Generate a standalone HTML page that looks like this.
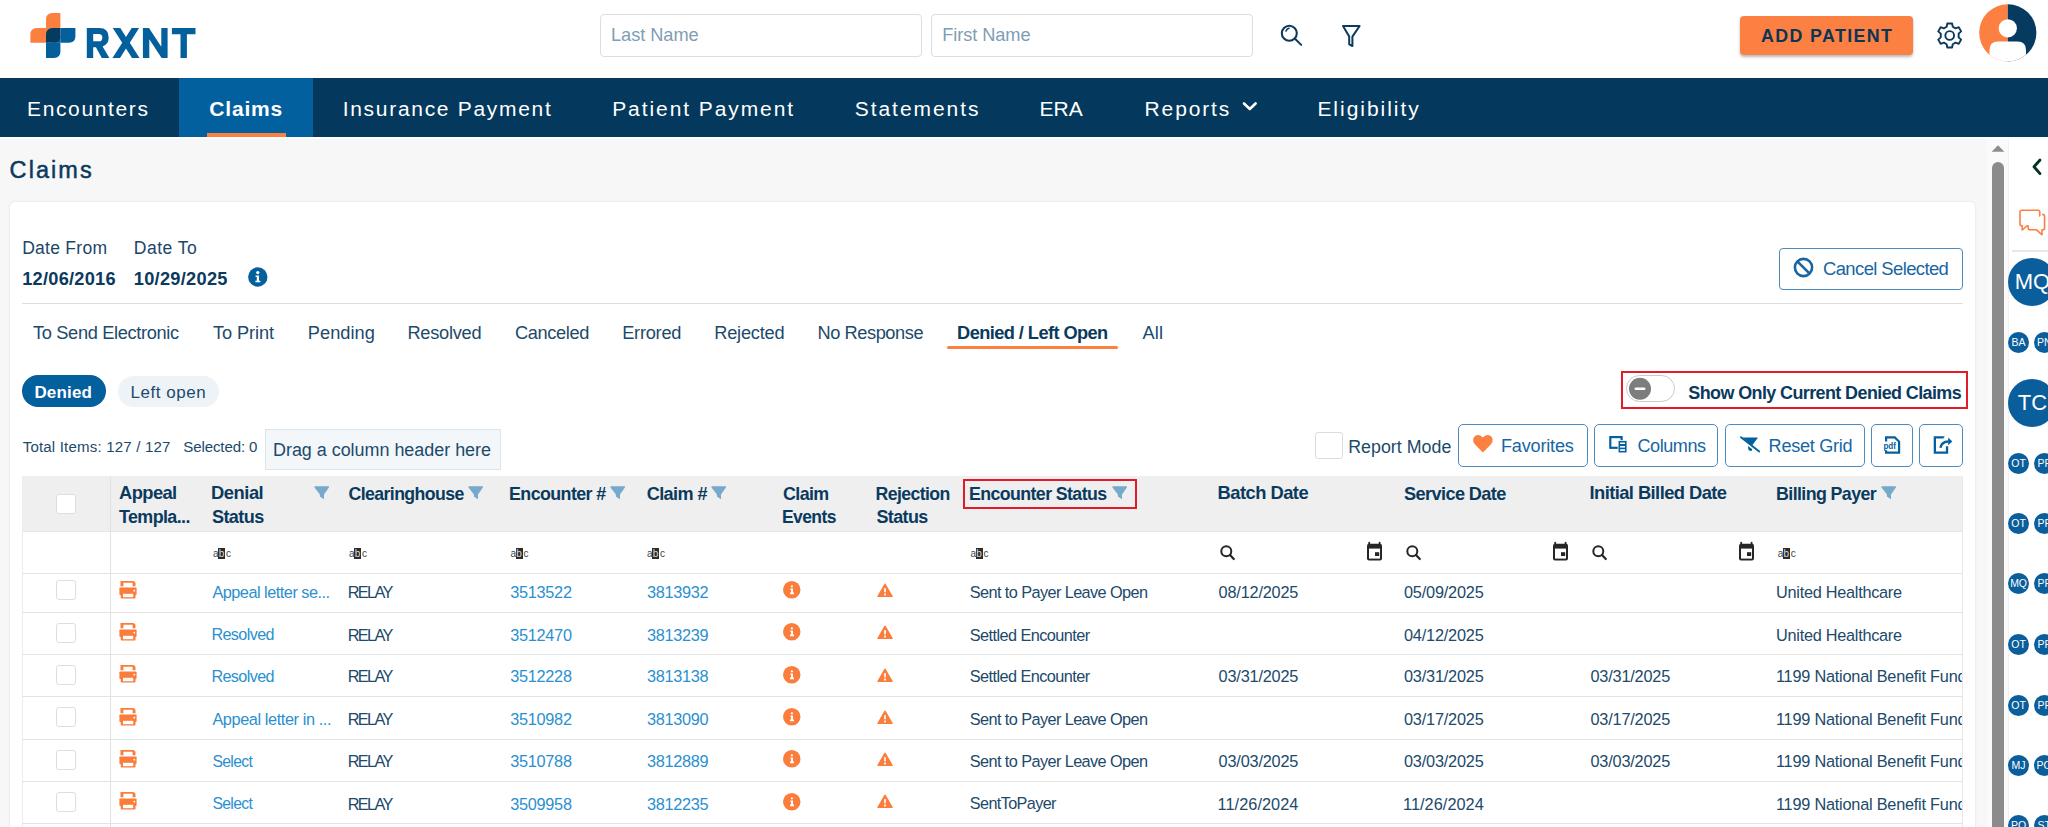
<!DOCTYPE html>
<html><head><meta charset="utf-8"><title>Claims</title>
<style>
html,body{margin:0;padding:0;width:2048px;height:827px;overflow:hidden;background:#f7f7f7;font-family:"Liberation Sans",sans-serif;}
.a{position:absolute;box-sizing:border-box;}
.t{position:absolute;white-space:nowrap;line-height:1;}
svg{position:absolute;overflow:visible;}
</style></head><body>
<!-- header -->
<div class="a" style="left:0;top:0;width:2048px;height:78px;background:#fff"></div>
<svg style="left:0;top:0" width="220" height="78">
  <path d="M46 28 V19.5 Q46 13 52.5 13 H60.4 V28 Z" fill="#fb7f3f"/>
  <path d="M30.4 42.8 V34.5 Q30.4 28 36.9 28 H46 V42.8 Z" fill="#fb7f3f"/>
  <path d="M60.4 28 H75.4 V36.3 Q75.4 42.8 68.9 42.8 H60.4 Z" fill="#04609d"/>
  <path d="M46 42.8 H60.4 V51.5 Q60.4 58 53.9 58 H46 Z" fill="#04609d"/>
  <path d="M46 28 H53.2 V35.4 H46 Z" fill="#fb7f3f"/><path d="M53.2 35.4 H60.4 V42.8 H53.2 Z" fill="#04609d"/>
  <path d="M52.8 28 H60.4 V36.3 Q60.4 42.8 53.9 42.8 H46 V34.8 Q46 28 52.8 28 Z" fill="#063b60"/>
  <path fill="#04609d" fill-rule="evenodd" d="M86.8 58 V28.1 H99.2 Q108.7 28.1 108.7 37.6 Q108.7 44.4 102.6 46.6 L109.4 58 H101.8 L95.9 47.2 H93.2 V58 Z M93.2 34 V41.3 H98.8 Q102.3 41.3 102.3 37.65 Q102.3 34 98.8 34 Z"/>
  <path fill="#04609d" d="M112.8 28.1 H120.3 L126 36.9 L131.7 28.1 H139.1 L129.8 42.7 L139.5 58 H132 L126 48.5 L120 58 H112.5 L122.2 42.7 Z"/>
  <path fill="#04609d" d="M142.9 58 V28.1 H149 L161.3 46.8 V28.1 H167.6 V58 H161.6 L149.3 39.2 V58 Z"/>
  <path fill="#04609d" d="M171.9 28.1 H195.5 V34.2 H186.9 V58 H180.5 V34.2 H171.9 Z"/>
</svg>
<div class="a" style="left:600px;top:14px;width:322px;height:43px;border:1px solid #dedede;border-radius:4px;background:#fff"></div>
<div class="a" style="left:931px;top:14px;width:322px;height:43px;border:1px solid #dedede;border-radius:4px;background:#fff"></div>
<svg style="left:1278px;top:22px" width="30" height="30">
  <circle cx="11.3" cy="11.2" r="7.5" fill="none" stroke="#0b3a5e" stroke-width="2.1"/>
  <path d="M17 16.8 L23.2 22.9" stroke="#0b3a5e" stroke-width="2" stroke-linecap="round"/>
  <path d="M8 9 Q9 6.8 11 6.3" stroke="#0b3a5e" stroke-width="1.6" fill="none" stroke-linecap="round"/>
</svg>
<svg style="left:1340px;top:24px" width="24" height="26">
  <path d="M3 2 H19.6 L12.4 12.6 V22 L9.2 20.3 V12.6 Z" fill="none" stroke="#0b3a5e" stroke-width="2" stroke-linejoin="round"/>
</svg>
<div class="a" style="left:1740px;top:16px;width:173px;height:39px;background:#fb8041;border-radius:4px;box-shadow:0 2px 3px rgba(0,0,0,0.28)"></div>
<svg style="left:1936px;top:22px" width="28" height="28">
  <g transform="translate(13.7,13.5) scale(1.09)" fill="none" stroke="#0b3a5e" stroke-width="1.75" stroke-linejoin="round">
    <path id="gear" d="M-2.2 -11 L2.2 -11 L2.8 -8 L5.4 -6.6 L8.3 -7.6 L10.5 -3.8 L8.2 -1.7 L8.2 1.7 L10.5 3.8 L8.3 7.6 L5.4 6.6 L2.8 8 L2.2 11 L-2.2 11 L-2.8 8 L-5.4 6.6 L-8.3 7.6 L-10.5 3.8 L-8.2 1.7 L-8.2 -1.7 L-10.5 -3.8 L-8.3 -7.6 L-5.4 -6.6 L-2.8 -8 Z"/>
    <circle r="4"/>
  </g>
</svg>
<svg style="left:1979px;top:4px" width="58" height="58">
  <defs><clipPath id="cav"><circle cx="28.8" cy="28.8" r="28.6"/></clipPath></defs>
  <g clip-path="url(#cav)">
    <rect x="0" y="0" width="28.8" height="58" fill="#fb8041"/>
    <rect x="28.8" y="0" width="30" height="58" fill="#063a5e"/>
    <circle cx="28.8" cy="24.3" r="9.1" fill="#fff"/>
    <path d="M10.5 60 V46 Q10.5 37.5 19 37.5 H38.6 Q47 37.5 47 46 V60 Z" fill="#fff"/>
  </g>
</svg>
<!-- nav -->
<div class="a" style="left:0;top:78px;width:2048px;height:59px;background:#04395d"></div>
<div class="a" style="left:179px;top:78px;width:134px;height:59px;background:#03609e"></div>
<div class="a" style="left:207px;top:133px;width:79px;height:4px;background:#fb8041"></div>
<svg style="left:1240px;top:98px" width="20" height="16">
  <path d="M4 5.5 L9.8 11 L15.6 5.5" fill="none" stroke="#fff" stroke-width="2.6" stroke-linecap="round" stroke-linejoin="round"/>
</svg>
<!-- page card -->
<div class="a" style="left:10px;top:202px;width:1965px;height:640px;background:#fff;border-radius:5px;box-shadow:0 0 3px rgba(0,0,0,0.10)"></div>
<svg style="left:248px;top:267px" width="20" height="20">
  <circle cx="9.8" cy="10" r="9.7" fill="#04609d"/>
  <circle cx="9.8" cy="5.6" r="1.6" fill="#fff"/>
  <path d="M7.6 8.5 H11 V13.8 H12.4 V15.2 H7.4 V13.8 H8.8 V9.9 H7.6 Z" fill="#fff"/>
</svg>
<div class="a" style="left:1779px;top:248px;width:184px;height:42px;border:1.5px solid #4a8bc0;border-radius:4px"></div>
<svg style="left:1792px;top:256.2px" width="24" height="24">
  <circle cx="11.5" cy="11.5" r="8.6" fill="none" stroke="#1766a3" stroke-width="2.6"/>
  <path d="M5.6 5.6 L17.4 17.4" stroke="#1766a3" stroke-width="2.6"/>
</svg>
<div class="a" style="left:22px;top:302.5px;width:1941px;height:1.5px;background:#dedede"></div>
<div class="a" style="left:947px;top:346px;width:171px;height:3px;background:#fb8041;border-radius:2px"></div>
<div class="a" style="left:22px;top:375px;width:84px;height:32px;background:#04609d;border-radius:16px"></div>
<div class="a" style="left:118px;top:375.5px;width:101px;height:31px;background:#eef3f7;border-radius:16px"></div>
<div class="a" style="left:1621px;top:371px;width:347px;height:38px;border:2px solid #e21b2b"></div>
<div class="a" style="left:1626px;top:375px;width:49px;height:27px;border:1.2px solid #c9c9c9;border-radius:14px;background:#fff"></div>
<svg style="left:1627px;top:377px" width="26" height="26">
  <circle cx="13" cy="11.7" r="11" fill="#7d7d7d"/>
  <rect x="7.6" y="10.6" width="10.8" height="2.4" rx="1" fill="#fff"/>
</svg>
<!-- toolbar -->
<div class="a" style="left:264.6px;top:428.5px;width:236px;height:41px;background:#f3f7fa;border:1px solid #dbe5ec"></div>
<div class="a" style="left:1314.8px;top:432.4px;width:28px;height:27px;border:1px solid #dcdcdc;border-radius:3px;background:#fff"></div>
<div class="a" style="left:1458.3px;top:424.2px;width:129.4px;height:42.8px;border:1.5px solid #4a8bc0;border-radius:5px"></div>
<div class="a" style="left:1594.3px;top:424.2px;width:124.1px;height:42.8px;border:1.5px solid #4a8bc0;border-radius:5px"></div>
<div class="a" style="left:1725.4px;top:424.2px;width:139.4px;height:42.8px;border:1.5px solid #4a8bc0;border-radius:5px"></div>
<div class="a" style="left:1871.2px;top:424.2px;width:42.1px;height:42.8px;border:1.5px solid #4a8bc0;border-radius:5px"></div>
<div class="a" style="left:1919.4px;top:424.2px;width:43.2px;height:42.8px;border:1.5px solid #4a8bc0;border-radius:5px"></div>
<svg style="left:1472px;top:434px" width="22" height="20">
  <path d="M10.9 18.6 L3 10.6 Q0.6 8.2 1.2 5.2 Q2 1.5 5.8 1.1 Q8.9 0.9 10.9 3.6 Q12.9 0.9 16 1.1 Q19.8 1.5 20.6 5.2 Q21.2 8.2 18.8 10.6 Z" fill="#fb8041"/>
</svg>
<svg style="left:1608px;top:434px" width="22" height="22">
  <rect x="2.3" y="3.1" width="11.3" height="10.7" fill="none" stroke="#04609d" stroke-width="2.2"/>
  <rect x="10.1" y="6.5" width="8.9" height="12.4" fill="#04609d" stroke="#fff" stroke-width="0.8"/>
  <rect x="12.1" y="8.5" width="4.9" height="1.5" fill="#fff"/><rect x="12.1" y="12" width="4.9" height="1.6" fill="#fff"/><rect x="12.1" y="15.2" width="4.9" height="1.7" fill="#fff"/>
</svg>
<svg style="left:1739px;top:434px" width="22" height="20">
  <path d="M3.6 3.5 H18.4 Q19 3.6 18.5 4.3 L13.1 11.4 Z" fill="#04609d"/>
  <path d="M2 3.2 L20.2 17.5" stroke="#04609d" stroke-width="1.9" stroke-linecap="round"/>
  <path d="M9.1 11.9 L13 14.9 Q13.6 17.2 11.6 17 Q9.1 16.6 9.1 14.2 Z" fill="#04609d"/>
</svg>
<svg style="left:1882px;top:436px" width="22" height="20">
  <path d="M3 0.2 H13.2 L18.2 5.2 V17.7 H3 V14.2 H5.2 V15.5 H16 V6.1 L12.3 2.4 H5.2 V5.4 H3 Z" fill="#04609d"/>
  <text x="1.4" y="12.6" font-family="Liberation Sans" font-weight="700" font-size="8.6" fill="#04609d" textLength="12.6" lengthAdjust="spacingAndGlyphs">pdf</text>
</svg>
<svg style="left:1932px;top:435px" width="22" height="22">
  <path d="M1.7 1.2 H12.8 L11.3 3.5 H4 V16.4 H13.9 V11.3 H16.2 V18.7 H1.7 Z" fill="#04609d"/>
  <path d="M8.4 12.8 Q9.4 6.5 16.6 6.4" fill="none" stroke="#04609d" stroke-width="2.5"/>
  <path d="M16.2 2.6 L20.3 6.4 L16.2 10.2 Z" fill="#04609d"/>
</svg>
<!-- grid -->
<div class="a" style="left:22px;top:476px;width:1941px;height:56px;background:#efefef"></div>
<div class="a" style="left:963.4px;top:479px;width:174px;height:30px;border:2px solid #e21b2b"></div>
<div class="a" style="left:22px;top:531px;width:1941px;height:1px;background:#e6e6e6"></div>
<div class="a" style="left:22px;top:573px;width:1941px;height:1px;background:#e4e4e4"></div>
<div class="a" style="left:1962px;top:476px;width:1px;height:360px;background:#e8e8e8"></div>
<div class="a" style="left:109.5px;top:476px;width:1.5px;height:360px;background:#e2e2e2"></div>
<div class="a" style="left:22px;top:476px;width:1px;height:360px;background:#ececec"></div>
<div class="a" style="left:56.3px;top:494px;width:19.6px;height:19.5px;border:1px solid #dedede;border-radius:3px;background:#fff"></div>
<svg style="left:313.5px;top:486.0px" width="16" height="14"><path d="M1.2 0.2 H14.2 Q15.6 0.2 14.9 1.4 L10 8.4 V13.3 L5.9 10.6 V8.4 L0.5 1.4 Q-0.2 0.2 1.2 0.2 Z" fill="#76a9cc"/></svg>
<svg style="left:467.8px;top:486.0px" width="16" height="14"><path d="M1.2 0.2 H14.2 Q15.6 0.2 14.9 1.4 L10 8.4 V13.3 L5.9 10.6 V8.4 L0.5 1.4 Q-0.2 0.2 1.2 0.2 Z" fill="#76a9cc"/></svg>
<svg style="left:610.0px;top:486.0px" width="16" height="14"><path d="M1.2 0.2 H14.2 Q15.6 0.2 14.9 1.4 L10 8.4 V13.3 L5.9 10.6 V8.4 L0.5 1.4 Q-0.2 0.2 1.2 0.2 Z" fill="#76a9cc"/></svg>
<svg style="left:711.0px;top:486.0px" width="16" height="14"><path d="M1.2 0.2 H14.2 Q15.6 0.2 14.9 1.4 L10 8.4 V13.3 L5.9 10.6 V8.4 L0.5 1.4 Q-0.2 0.2 1.2 0.2 Z" fill="#76a9cc"/></svg>
<svg style="left:1112.0px;top:486.0px" width="16" height="14"><path d="M1.2 0.2 H14.2 Q15.6 0.2 14.9 1.4 L10 8.4 V13.3 L5.9 10.6 V8.4 L0.5 1.4 Q-0.2 0.2 1.2 0.2 Z" fill="#76a9cc"/></svg>
<svg style="left:1881.0px;top:486.0px" width="16" height="14"><path d="M1.2 0.2 H14.2 Q15.6 0.2 14.9 1.4 L10 8.4 V13.3 L5.9 10.6 V8.4 L0.5 1.4 Q-0.2 0.2 1.2 0.2 Z" fill="#76a9cc"/></svg>
<div class="a" style="left:212.9px;top:547px;width:20px;height:13px;font-family:'Liberation Sans';font-size:10px;line-height:13px;color:#444;white-space:nowrap"><span style="position:absolute;left:0;top:0">a</span><span style="position:absolute;left:5px;top:1px;width:7px;height:11px;background:#2b2b2b"></span><span style="position:absolute;left:5.8px;top:0;color:#ddd">b</span><span style="position:absolute;left:13px;top:0">c</span></div>
<div class="a" style="left:348.9px;top:547px;width:20px;height:13px;font-family:'Liberation Sans';font-size:10px;line-height:13px;color:#444;white-space:nowrap"><span style="position:absolute;left:0;top:0">a</span><span style="position:absolute;left:5px;top:1px;width:7px;height:11px;background:#2b2b2b"></span><span style="position:absolute;left:5.8px;top:0;color:#ddd">b</span><span style="position:absolute;left:13px;top:0">c</span></div>
<div class="a" style="left:510.5px;top:547px;width:20px;height:13px;font-family:'Liberation Sans';font-size:10px;line-height:13px;color:#444;white-space:nowrap"><span style="position:absolute;left:0;top:0">a</span><span style="position:absolute;left:5px;top:1px;width:7px;height:11px;background:#2b2b2b"></span><span style="position:absolute;left:5.8px;top:0;color:#ddd">b</span><span style="position:absolute;left:13px;top:0">c</span></div>
<div class="a" style="left:647.0px;top:547px;width:20px;height:13px;font-family:'Liberation Sans';font-size:10px;line-height:13px;color:#444;white-space:nowrap"><span style="position:absolute;left:0;top:0">a</span><span style="position:absolute;left:5px;top:1px;width:7px;height:11px;background:#2b2b2b"></span><span style="position:absolute;left:5.8px;top:0;color:#ddd">b</span><span style="position:absolute;left:13px;top:0">c</span></div>
<div class="a" style="left:970.5px;top:547px;width:20px;height:13px;font-family:'Liberation Sans';font-size:10px;line-height:13px;color:#444;white-space:nowrap"><span style="position:absolute;left:0;top:0">a</span><span style="position:absolute;left:5px;top:1px;width:7px;height:11px;background:#2b2b2b"></span><span style="position:absolute;left:5.8px;top:0;color:#ddd">b</span><span style="position:absolute;left:13px;top:0">c</span></div>
<div class="a" style="left:1777.7px;top:547px;width:20px;height:13px;font-family:'Liberation Sans';font-size:10px;line-height:13px;color:#444;white-space:nowrap"><span style="position:absolute;left:0;top:0">a</span><span style="position:absolute;left:5px;top:1px;width:7px;height:11px;background:#2b2b2b"></span><span style="position:absolute;left:5.8px;top:0;color:#ddd">b</span><span style="position:absolute;left:13px;top:0">c</span></div>
<svg style="left:1219.6px;top:545px" width="18" height="18"><circle cx="6.3" cy="6.3" r="5" fill="none" stroke="#262626" stroke-width="2"/><path d="M10 10 L13.8 14" stroke="#262626" stroke-width="2.2" stroke-linecap="round"/></svg>
<svg style="left:1405.8px;top:545px" width="18" height="18"><circle cx="6.3" cy="6.3" r="5" fill="none" stroke="#262626" stroke-width="2"/><path d="M10 10 L13.8 14" stroke="#262626" stroke-width="2.2" stroke-linecap="round"/></svg>
<svg style="left:1592.2px;top:545px" width="18" height="18"><circle cx="6.3" cy="6.3" r="5" fill="none" stroke="#262626" stroke-width="2"/><path d="M10 10 L13.8 14" stroke="#262626" stroke-width="2.2" stroke-linecap="round"/></svg>
<svg style="left:1365.8px;top:541.5px" width="18" height="20"><path d="M3.2 0.6 V2 M13.6 0.6 V2" stroke="#262626" stroke-width="1.8" stroke-linecap="round"/><rect x="1" y="1.8" width="15" height="16.8" rx="2" fill="#262626"/><rect x="3" y="6.6" width="11" height="10" fill="#fff"/><rect x="9" y="10.2" width="4.2" height="3.8" fill="#262626"/></svg>
<svg style="left:1552.0px;top:541.5px" width="18" height="20"><path d="M3.2 0.6 V2 M13.6 0.6 V2" stroke="#262626" stroke-width="1.8" stroke-linecap="round"/><rect x="1" y="1.8" width="15" height="16.8" rx="2" fill="#262626"/><rect x="3" y="6.6" width="11" height="10" fill="#fff"/><rect x="9" y="10.2" width="4.2" height="3.8" fill="#262626"/></svg>
<svg style="left:1738.4px;top:541.5px" width="18" height="20"><path d="M3.2 0.6 V2 M13.6 0.6 V2" stroke="#262626" stroke-width="1.8" stroke-linecap="round"/><rect x="1" y="1.8" width="15" height="16.8" rx="2" fill="#262626"/><rect x="3" y="6.6" width="11" height="10" fill="#fff"/><rect x="9" y="10.2" width="4.2" height="3.8" fill="#262626"/></svg>
<div class="a" style="left:22px;top:612px;width:1941px;height:1px;background:#e4e4e4"></div>
<div class="a" style="left:56.3px;top:580.3px;width:19.6px;height:20px;border:1px solid #dedede;border-radius:3px;background:#fff"></div>
<svg style="left:118.5px;top:580.7px" width="18" height="19"><path d="M1.5 5.2 V0.1 H13.8 Q16.5 0.1 16.5 2.8 V5.2 H13.6 V1.7 H4.4 V5.2 Z" fill="#fb7d3c"/><rect x="0.4" y="6.4" width="17.2" height="7.7" rx="0.8" fill="#fb7d3c"/><circle cx="15.3" cy="9.7" r="0.9" fill="#fff"/><rect x="1.7" y="12.4" width="14.8" height="5.1" rx="0.8" fill="#fb7d3c"/><rect x="4" y="12.8" width="10.2" height="3.4" fill="#fff"/></svg>
<svg style="left:783px;top:581.0px" width="18" height="18"><circle cx="8.75" cy="8.75" r="8.75" fill="#fb7d3c"/><circle cx="8.9" cy="5.3" r="1.1" fill="#fff"/><path d="M7.3 7.4 H10 V11.6 H11 V13.2 H7 V11.6 H8 V8.8 H7.3 Z" fill="#fff"/></svg>
<svg style="left:877px;top:582.9px" width="17" height="15"><path d="M8 0.4 Q8.4 0.4 8.7 0.9 L15.8 13.2 Q16.1 14 15.2 14 H0.9 Q-0.1 14 0.3 13.2 L7.3 0.9 Q7.6 0.4 8 0.4 Z" fill="#fb7d3c"/><rect x="7.15" y="5.1" width="1.7" height="4.2" fill="#fff"/><rect x="7.15" y="10.5" width="1.7" height="2" fill="#fff"/></svg>
<div class="a" style="left:22px;top:654px;width:1941px;height:1px;background:#e4e4e4"></div>
<div class="a" style="left:56.3px;top:622.7px;width:19.6px;height:20px;border:1px solid #dedede;border-radius:3px;background:#fff"></div>
<svg style="left:118.5px;top:623.1px" width="18" height="19"><path d="M1.5 5.2 V0.1 H13.8 Q16.5 0.1 16.5 2.8 V5.2 H13.6 V1.7 H4.4 V5.2 Z" fill="#fb7d3c"/><rect x="0.4" y="6.4" width="17.2" height="7.7" rx="0.8" fill="#fb7d3c"/><circle cx="15.3" cy="9.7" r="0.9" fill="#fff"/><rect x="1.7" y="12.4" width="14.8" height="5.1" rx="0.8" fill="#fb7d3c"/><rect x="4" y="12.8" width="10.2" height="3.4" fill="#fff"/></svg>
<svg style="left:783px;top:623.4px" width="18" height="18"><circle cx="8.75" cy="8.75" r="8.75" fill="#fb7d3c"/><circle cx="8.9" cy="5.3" r="1.1" fill="#fff"/><path d="M7.3 7.4 H10 V11.6 H11 V13.2 H7 V11.6 H8 V8.8 H7.3 Z" fill="#fff"/></svg>
<svg style="left:877px;top:625.3px" width="17" height="15"><path d="M8 0.4 Q8.4 0.4 8.7 0.9 L15.8 13.2 Q16.1 14 15.2 14 H0.9 Q-0.1 14 0.3 13.2 L7.3 0.9 Q7.6 0.4 8 0.4 Z" fill="#fb7d3c"/><rect x="7.15" y="5.1" width="1.7" height="4.2" fill="#fff"/><rect x="7.15" y="10.5" width="1.7" height="2" fill="#fff"/></svg>
<div class="a" style="left:22px;top:696px;width:1941px;height:1px;background:#e4e4e4"></div>
<div class="a" style="left:56.3px;top:665.0px;width:19.6px;height:20px;border:1px solid #dedede;border-radius:3px;background:#fff"></div>
<svg style="left:118.5px;top:665.4px" width="18" height="19"><path d="M1.5 5.2 V0.1 H13.8 Q16.5 0.1 16.5 2.8 V5.2 H13.6 V1.7 H4.4 V5.2 Z" fill="#fb7d3c"/><rect x="0.4" y="6.4" width="17.2" height="7.7" rx="0.8" fill="#fb7d3c"/><circle cx="15.3" cy="9.7" r="0.9" fill="#fff"/><rect x="1.7" y="12.4" width="14.8" height="5.1" rx="0.8" fill="#fb7d3c"/><rect x="4" y="12.8" width="10.2" height="3.4" fill="#fff"/></svg>
<svg style="left:783px;top:665.7px" width="18" height="18"><circle cx="8.75" cy="8.75" r="8.75" fill="#fb7d3c"/><circle cx="8.9" cy="5.3" r="1.1" fill="#fff"/><path d="M7.3 7.4 H10 V11.6 H11 V13.2 H7 V11.6 H8 V8.8 H7.3 Z" fill="#fff"/></svg>
<svg style="left:877px;top:667.6px" width="17" height="15"><path d="M8 0.4 Q8.4 0.4 8.7 0.9 L15.8 13.2 Q16.1 14 15.2 14 H0.9 Q-0.1 14 0.3 13.2 L7.3 0.9 Q7.6 0.4 8 0.4 Z" fill="#fb7d3c"/><rect x="7.15" y="5.1" width="1.7" height="4.2" fill="#fff"/><rect x="7.15" y="10.5" width="1.7" height="2" fill="#fff"/></svg>
<div class="a" style="left:22px;top:739px;width:1941px;height:1px;background:#e4e4e4"></div>
<div class="a" style="left:56.3px;top:707.3px;width:19.6px;height:20px;border:1px solid #dedede;border-radius:3px;background:#fff"></div>
<svg style="left:118.5px;top:707.7px" width="18" height="19"><path d="M1.5 5.2 V0.1 H13.8 Q16.5 0.1 16.5 2.8 V5.2 H13.6 V1.7 H4.4 V5.2 Z" fill="#fb7d3c"/><rect x="0.4" y="6.4" width="17.2" height="7.7" rx="0.8" fill="#fb7d3c"/><circle cx="15.3" cy="9.7" r="0.9" fill="#fff"/><rect x="1.7" y="12.4" width="14.8" height="5.1" rx="0.8" fill="#fb7d3c"/><rect x="4" y="12.8" width="10.2" height="3.4" fill="#fff"/></svg>
<svg style="left:783px;top:708.0px" width="18" height="18"><circle cx="8.75" cy="8.75" r="8.75" fill="#fb7d3c"/><circle cx="8.9" cy="5.3" r="1.1" fill="#fff"/><path d="M7.3 7.4 H10 V11.6 H11 V13.2 H7 V11.6 H8 V8.8 H7.3 Z" fill="#fff"/></svg>
<svg style="left:877px;top:709.9px" width="17" height="15"><path d="M8 0.4 Q8.4 0.4 8.7 0.9 L15.8 13.2 Q16.1 14 15.2 14 H0.9 Q-0.1 14 0.3 13.2 L7.3 0.9 Q7.6 0.4 8 0.4 Z" fill="#fb7d3c"/><rect x="7.15" y="5.1" width="1.7" height="4.2" fill="#fff"/><rect x="7.15" y="10.5" width="1.7" height="2" fill="#fff"/></svg>
<div class="a" style="left:22px;top:781px;width:1941px;height:1px;background:#e4e4e4"></div>
<div class="a" style="left:56.3px;top:749.5px;width:19.6px;height:20px;border:1px solid #dedede;border-radius:3px;background:#fff"></div>
<svg style="left:118.5px;top:749.9px" width="18" height="19"><path d="M1.5 5.2 V0.1 H13.8 Q16.5 0.1 16.5 2.8 V5.2 H13.6 V1.7 H4.4 V5.2 Z" fill="#fb7d3c"/><rect x="0.4" y="6.4" width="17.2" height="7.7" rx="0.8" fill="#fb7d3c"/><circle cx="15.3" cy="9.7" r="0.9" fill="#fff"/><rect x="1.7" y="12.4" width="14.8" height="5.1" rx="0.8" fill="#fb7d3c"/><rect x="4" y="12.8" width="10.2" height="3.4" fill="#fff"/></svg>
<svg style="left:783px;top:750.2px" width="18" height="18"><circle cx="8.75" cy="8.75" r="8.75" fill="#fb7d3c"/><circle cx="8.9" cy="5.3" r="1.1" fill="#fff"/><path d="M7.3 7.4 H10 V11.6 H11 V13.2 H7 V11.6 H8 V8.8 H7.3 Z" fill="#fff"/></svg>
<svg style="left:877px;top:752.1px" width="17" height="15"><path d="M8 0.4 Q8.4 0.4 8.7 0.9 L15.8 13.2 Q16.1 14 15.2 14 H0.9 Q-0.1 14 0.3 13.2 L7.3 0.9 Q7.6 0.4 8 0.4 Z" fill="#fb7d3c"/><rect x="7.15" y="5.1" width="1.7" height="4.2" fill="#fff"/><rect x="7.15" y="10.5" width="1.7" height="2" fill="#fff"/></svg>
<div class="a" style="left:22px;top:823px;width:1941px;height:1px;background:#e4e4e4"></div>
<div class="a" style="left:56.3px;top:791.8px;width:19.6px;height:20px;border:1px solid #dedede;border-radius:3px;background:#fff"></div>
<svg style="left:118.5px;top:792.2px" width="18" height="19"><path d="M1.5 5.2 V0.1 H13.8 Q16.5 0.1 16.5 2.8 V5.2 H13.6 V1.7 H4.4 V5.2 Z" fill="#fb7d3c"/><rect x="0.4" y="6.4" width="17.2" height="7.7" rx="0.8" fill="#fb7d3c"/><circle cx="15.3" cy="9.7" r="0.9" fill="#fff"/><rect x="1.7" y="12.4" width="14.8" height="5.1" rx="0.8" fill="#fb7d3c"/><rect x="4" y="12.8" width="10.2" height="3.4" fill="#fff"/></svg>
<svg style="left:783px;top:792.5px" width="18" height="18"><circle cx="8.75" cy="8.75" r="8.75" fill="#fb7d3c"/><circle cx="8.9" cy="5.3" r="1.1" fill="#fff"/><path d="M7.3 7.4 H10 V11.6 H11 V13.2 H7 V11.6 H8 V8.8 H7.3 Z" fill="#fff"/></svg>
<svg style="left:877px;top:794.4px" width="17" height="15"><path d="M8 0.4 Q8.4 0.4 8.7 0.9 L15.8 13.2 Q16.1 14 15.2 14 H0.9 Q-0.1 14 0.3 13.2 L7.3 0.9 Q7.6 0.4 8 0.4 Z" fill="#fb7d3c"/><rect x="7.15" y="5.1" width="1.7" height="4.2" fill="#fff"/><rect x="7.15" y="10.5" width="1.7" height="2" fill="#fff"/></svg>
<!-- scrollbar and sidebar -->
<div class="a" style="left:0;top:137px;width:2048px;height:1.6px;background:#fff"></div>
<div class="a" style="left:1987px;top:138.6px;width:21.5px;height:690px;background:#fafafa"></div>
<svg style="left:1990px;top:144px" width="16" height="10"><path d="M1.6 7.8 L8 1.2 L14.4 7.8 Z" fill="#8d8d8d"/></svg>
<div class="a" style="left:1992px;top:161.6px;width:12px;height:680px;background:#8b8b8b;border-radius:6px"></div>
<div class="a" style="left:2008px;top:138.6px;width:40px;height:690px;background:#fff;border-left:1px solid #f0f0f0"></div>
<svg style="left:2030px;top:157px" width="14" height="20"><path d="M10 3 L4 9.8 L10 16.6" fill="none" stroke="#06301f" stroke-width="2.8" stroke-linecap="round" stroke-linejoin="round"/></svg>
<svg style="left:2018px;top:209px" width="30" height="30">
  <path d="M2 3 Q2 1.2 3.8 1.2 H20 Q21.8 1.2 21.8 3 V15 Q21.8 16.8 20 16.8 H9 L4.2 21 V16.8 H3.8 Q2 16.8 2 15 Z" fill="#fff" stroke="#fb8041" stroke-width="1.6" stroke-linejoin="round"/>
  <path d="M24.2 5.4 Q26.6 5.4 26.6 7.6 V19 Q26.6 20.8 24.8 20.8 H24 V25.8 L18.6 20.8 H12 Q10.2 20.8 10.2 19 V16.8" fill="#fff" stroke="#fb8041" stroke-width="1.6" stroke-linejoin="round"/>
</svg>
<div class="a" style="left:2012px;top:250px;width:36px;height:1.5px;background:#e8e8e8"></div>
<div class="a" style="left:2008.4px;top:258.2px;width:48.0px;height:48.0px;border-radius:50%;background:#0a5e9b;color:#fff;font-size:22.0px;line-height:48.0px;text-align:center;white-space:nowrap;overflow:hidden">MQ</div>
<div class="a" style="left:2008.4px;top:378.5px;width:48.0px;height:48.0px;border-radius:50%;background:#0a5e9b;color:#fff;font-size:22.0px;line-height:48.0px;text-align:center;white-space:nowrap;overflow:hidden">TC</div>
<div class="a" style="left:2008.0px;top:331.9px;width:21.2px;height:21.2px;border-radius:50%;background:#0a5e9b;color:#fff;font-size:10.5px;line-height:21.2px;text-align:center;white-space:nowrap;overflow:hidden">BA</div>
<div class="a" style="left:2033.6px;top:331.9px;width:21.2px;height:21.2px;border-radius:50%;background:#0a5e9b;color:#fff;font-size:10.5px;line-height:21.2px;text-align:center;white-space:nowrap;overflow:hidden">PN</div>
<div class="a" style="left:2008.0px;top:452.7px;width:21.2px;height:21.2px;border-radius:50%;background:#0a5e9b;color:#fff;font-size:10.5px;line-height:21.2px;text-align:center;white-space:nowrap;overflow:hidden">OT</div>
<div class="a" style="left:2033.6px;top:452.7px;width:21.2px;height:21.2px;border-radius:50%;background:#0a5e9b;color:#fff;font-size:10.5px;line-height:21.2px;text-align:center;white-space:nowrap;overflow:hidden">PF</div>
<div class="a" style="left:2008.0px;top:512.9px;width:21.2px;height:21.2px;border-radius:50%;background:#0a5e9b;color:#fff;font-size:10.5px;line-height:21.2px;text-align:center;white-space:nowrap;overflow:hidden">OT</div>
<div class="a" style="left:2033.6px;top:512.9px;width:21.2px;height:21.2px;border-radius:50%;background:#0a5e9b;color:#fff;font-size:10.5px;line-height:21.2px;text-align:center;white-space:nowrap;overflow:hidden">PF</div>
<div class="a" style="left:2008.0px;top:572.8px;width:21.2px;height:21.2px;border-radius:50%;background:#0a5e9b;color:#fff;font-size:10.5px;line-height:21.2px;text-align:center;white-space:nowrap;overflow:hidden">MQ</div>
<div class="a" style="left:2033.6px;top:572.8px;width:21.2px;height:21.2px;border-radius:50%;background:#0a5e9b;color:#fff;font-size:10.5px;line-height:21.2px;text-align:center;white-space:nowrap;overflow:hidden">PF</div>
<div class="a" style="left:2008.0px;top:634.0px;width:21.2px;height:21.2px;border-radius:50%;background:#0a5e9b;color:#fff;font-size:10.5px;line-height:21.2px;text-align:center;white-space:nowrap;overflow:hidden">OT</div>
<div class="a" style="left:2033.6px;top:634.0px;width:21.2px;height:21.2px;border-radius:50%;background:#0a5e9b;color:#fff;font-size:10.5px;line-height:21.2px;text-align:center;white-space:nowrap;overflow:hidden">PF</div>
<div class="a" style="left:2008.0px;top:694.7px;width:21.2px;height:21.2px;border-radius:50%;background:#0a5e9b;color:#fff;font-size:10.5px;line-height:21.2px;text-align:center;white-space:nowrap;overflow:hidden">OT</div>
<div class="a" style="left:2033.6px;top:694.7px;width:21.2px;height:21.2px;border-radius:50%;background:#0a5e9b;color:#fff;font-size:10.5px;line-height:21.2px;text-align:center;white-space:nowrap;overflow:hidden">PF</div>
<div class="a" style="left:2008.0px;top:754.7px;width:21.2px;height:21.2px;border-radius:50%;background:#0a5e9b;color:#fff;font-size:10.5px;line-height:21.2px;text-align:center;white-space:nowrap;overflow:hidden">MJ</div>
<div class="a" style="left:2033.6px;top:754.7px;width:21.2px;height:21.2px;border-radius:50%;background:#0a5e9b;color:#fff;font-size:10.5px;line-height:21.2px;text-align:center;white-space:nowrap;overflow:hidden">PO</div>
<div class="a" style="left:2008.0px;top:814.9px;width:21.2px;height:21.2px;border-radius:50%;background:#0a5e9b;color:#fff;font-size:10.5px;line-height:21.2px;text-align:center;white-space:nowrap;overflow:hidden">PO</div>
<div class="a" style="left:2033.6px;top:814.9px;width:21.2px;height:21.2px;border-radius:50%;background:#0a5e9b;color:#fff;font-size:10.5px;line-height:21.2px;text-align:center;white-space:nowrap;overflow:hidden">ST</div><div id="t0" class="t" style="left:27.00px;top:97.89px;font-size:20.99px;font-weight:400;color:#fff;letter-spacing:1.638px;">Encounters</div>
<div id="t1" class="t" style="left:209.30px;top:97.73px;font-size:20.99px;font-weight:700;color:#fff;letter-spacing:0.831px;">Claims</div>
<div id="t2" class="t" style="left:342.70px;top:97.89px;font-size:20.99px;font-weight:400;color:#fff;letter-spacing:1.708px;">Insurance Payment</div>
<div id="t3" class="t" style="left:612.20px;top:97.89px;font-size:20.99px;font-weight:400;color:#fff;letter-spacing:1.926px;">Patient Payment</div>
<div id="t4" class="t" style="left:854.80px;top:97.89px;font-size:20.99px;font-weight:400;color:#fff;letter-spacing:1.939px;">Statements</div>
<div id="t5" class="t" style="left:1039.40px;top:97.89px;font-size:20.99px;font-weight:400;color:#fff;letter-spacing:0.075px;">ERA</div>
<div id="t6" class="t" style="left:1144.60px;top:97.89px;font-size:20.99px;font-weight:400;color:#fff;letter-spacing:1.869px;">Reports</div>
<div id="t7" class="t" style="left:1317.40px;top:97.89px;font-size:20.99px;font-weight:400;color:#fff;letter-spacing:1.976px;">Eligibility</div>
<div id="t8" class="t" style="left:611.00px;top:26.43px;font-size:18.23px;font-weight:400;color:#7f9db3;letter-spacing:-0.058px;">Last Name</div>
<div id="t9" class="t" style="left:942.20px;top:26.43px;font-size:18.23px;font-weight:400;color:#7f9db3;letter-spacing:-0.082px;">First Name</div>
<div id="t10" class="t" style="left:1761.00px;top:28.42px;font-size:17.81px;font-weight:700;color:#0b3557;letter-spacing:1.388px;">ADD PATIENT</div>
<div id="t11" class="t" style="left:9.60px;top:159.18px;font-size:23.47px;font-weight:400;color:#0a3a5e;letter-spacing:2.084px;-webkit-text-stroke:0.5px #0a3a5e;">Claims</div>
<div id="t12" class="t" style="left:22.20px;top:240.01px;font-size:17.54px;font-weight:400;color:#1c4668;letter-spacing:0.250px;">Date From</div>
<div id="t13" class="t" style="left:133.80px;top:240.01px;font-size:17.54px;font-weight:400;color:#1c4668;letter-spacing:0.472px;">Date To</div>
<div id="t14" class="t" style="left:22.20px;top:270.27px;font-size:18.23px;font-weight:700;color:#0a3a5e;letter-spacing:0.250px;">12/06/2016</div>
<div id="t15" class="t" style="left:133.80px;top:270.27px;font-size:18.23px;font-weight:700;color:#0a3a5e;letter-spacing:0.272px;">10/29/2025</div>
<div id="t16" class="t" style="left:1823.00px;top:260.44px;font-size:18.45px;font-weight:400;color:#1766a3;letter-spacing:-0.600px;">Cancel Selected</div>
<div id="t17" class="t" style="left:33.00px;top:324.43px;font-size:18.23px;font-weight:400;color:#1c4a6c;letter-spacing:-0.341px;">To Send Electronic</div>
<div id="t18" class="t" style="left:213.10px;top:324.43px;font-size:18.23px;font-weight:400;color:#1c4a6c;letter-spacing:-0.114px;">To Print</div>
<div id="t19" class="t" style="left:307.80px;top:324.43px;font-size:18.23px;font-weight:400;color:#1c4a6c;letter-spacing:0.029px;">Pending</div>
<div id="t20" class="t" style="left:407.40px;top:324.43px;font-size:18.23px;font-weight:400;color:#1c4a6c;letter-spacing:-0.246px;">Resolved</div>
<div id="t21" class="t" style="left:515.10px;top:324.42px;font-size:18.23px;font-weight:400;color:#1c4a6c;letter-spacing:-0.392px;">Canceled</div>
<div id="t22" class="t" style="left:622.20px;top:324.42px;font-size:18.23px;font-weight:400;color:#1c4a6c;letter-spacing:-0.253px;">Errored</div>
<div id="t23" class="t" style="left:714.30px;top:324.43px;font-size:18.23px;font-weight:400;color:#1c4a6c;letter-spacing:-0.239px;">Rejected</div>
<div id="t24" class="t" style="left:817.60px;top:324.43px;font-size:18.23px;font-weight:400;color:#1c4a6c;letter-spacing:-0.446px;">No Response</div>
<div id="t25" class="t" style="left:957.10px;top:324.27px;font-size:18.23px;font-weight:700;color:#0a3a5e;letter-spacing:-0.577px;">Denied / Left Open</div>
<div id="t26" class="t" style="left:1142.40px;top:324.43px;font-size:18.23px;font-weight:400;color:#1c4a6c;letter-spacing:0.150px;">All</div>
<div id="t27" class="t" style="left:34.40px;top:383.92px;font-size:16.98px;font-weight:700;color:#fff;letter-spacing:0.198px;">Denied</div>
<div id="t28" class="t" style="left:130.50px;top:384.08px;font-size:16.98px;font-weight:400;color:#1c4a6c;letter-spacing:0.559px;">Left open</div>
<div id="t29" class="t" style="left:1688.30px;top:384.70px;font-size:17.95px;font-weight:700;color:#0a3a5e;letter-spacing:-0.589px;">Show Only Current Denied Claims</div>
<div id="t30" class="t" style="left:22.70px;top:439.12px;font-size:15.05px;font-weight:400;color:#1c4a6c;letter-spacing:0.181px;">Total Items: 127 / 127</div>
<div id="t31" class="t" style="left:183.30px;top:439.12px;font-size:15.05px;font-weight:400;color:#1c4a6c;letter-spacing:-0.122px;">Selected: 0</div>
<div id="t32" class="t" style="left:273.00px;top:442.25px;font-size:17.95px;font-weight:400;color:#1c4a6c;letter-spacing:-0.016px;">Drag a column header here</div>
<div id="t33" class="t" style="left:1348.20px;top:439.37px;font-size:17.81px;font-weight:400;color:#1c4a6c;letter-spacing:0.022px;">Report Mode</div>
<div id="t34" class="t" style="left:1501.00px;top:436.73px;font-size:18.09px;font-weight:400;color:#1766a3;letter-spacing:-0.188px;">Favorites</div>
<div id="t35" class="t" style="left:1637.40px;top:436.73px;font-size:18.09px;font-weight:400;color:#1766a3;letter-spacing:-0.432px;">Columns</div>
<div id="t36" class="t" style="left:1768.60px;top:436.73px;font-size:18.09px;font-weight:400;color:#1766a3;letter-spacing:-0.272px;">Reset Grid</div>
<div id="t37" class="t" style="left:119.10px;top:484.38px;font-size:18.33px;font-weight:700;color:#0a3a5e;letter-spacing:-0.600px;">Appeal</div>
<div id="t38" class="t" style="left:119.00px;top:509.15px;font-size:17.89px;font-weight:700;color:#0a3a5e;letter-spacing:-0.600px;">Templa...</div>
<div id="t39" class="t" style="left:211.10px;top:484.35px;font-size:18.36px;font-weight:700;color:#0a3a5e;letter-spacing:-0.499px;">Denial</div>
<div id="t40" class="t" style="left:212.00px;top:508.00px;font-size:18.07px;font-weight:700;color:#0a3a5e;letter-spacing:-0.600px;">Status</div>
<div id="t41" class="t" style="left:348.60px;top:485.92px;font-size:17.69px;font-weight:700;color:#0a3a5e;letter-spacing:-0.600px;">Clearinghouse</div>
<div id="t42" class="t" style="left:509.03px;top:485.78px;font-size:17.86px;font-weight:700;color:#0a3a5e;letter-spacing:-0.600px;">Encounter #</div>
<div id="t43" class="t" style="left:646.70px;top:484.57px;font-size:18.11px;font-weight:700;color:#0a3a5e;letter-spacing:-0.600px;">Claim #</div>
<div id="t44" class="t" style="left:783.00px;top:485.78px;font-size:17.86px;font-weight:700;color:#0a3a5e;letter-spacing:-0.600px;">Claim</div>
<div id="t45" class="t" style="left:782.05px;top:509.49px;font-size:17.49px;font-weight:700;color:#0a3a5e;letter-spacing:-0.600px;">Events</div>
<div id="t46" class="t" style="left:875.54px;top:485.90px;font-size:17.71px;font-weight:700;color:#0a3a5e;letter-spacing:-0.600px;">Rejection</div>
<div id="t47" class="t" style="left:876.50px;top:509.08px;font-size:17.97px;font-weight:700;color:#0a3a5e;letter-spacing:-0.600px;">Status</div>
<div id="t48" class="t" style="left:969.03px;top:485.85px;font-size:17.78px;font-weight:700;color:#0a3a5e;letter-spacing:-0.600px;">Encounter Status</div>
<div id="t49" class="t" style="left:1217.60px;top:484.35px;font-size:18.36px;font-weight:700;color:#0a3a5e;letter-spacing:-0.544px;">Batch Date</div>
<div id="t50" class="t" style="left:1404.00px;top:484.52px;font-size:18.16px;font-weight:700;color:#0a3a5e;letter-spacing:-0.600px;">Service Date</div>
<div id="t51" class="t" style="left:1589.50px;top:484.35px;font-size:18.36px;font-weight:700;color:#0a3a5e;letter-spacing:-0.579px;">Initial Billed Date</div>
<div id="t52" class="t" style="left:1776.03px;top:485.81px;font-size:17.82px;font-weight:700;color:#0a3a5e;letter-spacing:-0.600px;">Billing Payer</div>
<div id="t53" class="t" style="left:212.40px;top:584.05px;font-size:16.30px;font-weight:400;color:#2b90d0;letter-spacing:-0.499px;">Appeal letter se...</div>
<div id="t54" class="t" style="left:347.70px;top:584.05px;font-size:16.30px;font-weight:400;color:#21496a;letter-spacing:-1.606px;">RELAY</div>
<div id="t55" class="t" style="left:510.20px;top:584.05px;font-size:16.30px;font-weight:400;color:#2b90d0;letter-spacing:-0.272px;">3513522</div>
<div id="t56" class="t" style="left:646.90px;top:584.05px;font-size:16.30px;font-weight:400;color:#2b90d0;letter-spacing:-0.272px;">3813932</div>
<div id="t57" class="t" style="left:969.80px;top:584.05px;font-size:16.30px;font-weight:400;color:#21496a;letter-spacing:-0.593px;">Sent to Payer Leave Open</div>
<div id="t58" class="t" style="left:1218.60px;top:584.05px;font-size:16.30px;font-weight:400;color:#21496a;letter-spacing:-0.192px;">08/12/2025</div>
<div id="t59" class="t" style="left:1404.00px;top:584.05px;font-size:16.30px;font-weight:400;color:#21496a;letter-spacing:-0.192px;">05/09/2025</div>
<div id="t60" class="t" style="left:1776.00px;top:584.05px;font-size:16.30px;font-weight:400;color:#21496a;letter-spacing:-0.267px;">United Healthcare</div>
<div id="t61" class="t" style="left:211.41px;top:625.67px;font-size:16.17px;font-weight:400;color:#2b90d0;letter-spacing:-0.600px;">Resolved</div>
<div id="t62" class="t" style="left:347.70px;top:626.55px;font-size:16.30px;font-weight:400;color:#21496a;letter-spacing:-1.606px;">RELAY</div>
<div id="t63" class="t" style="left:510.20px;top:626.55px;font-size:16.30px;font-weight:400;color:#2b90d0;letter-spacing:-0.272px;">3512470</div>
<div id="t64" class="t" style="left:646.90px;top:626.55px;font-size:16.30px;font-weight:400;color:#2b90d0;letter-spacing:-0.272px;">3813239</div>
<div id="t65" class="t" style="left:969.80px;top:626.55px;font-size:16.30px;font-weight:400;color:#21496a;letter-spacing:-0.563px;">Settled Encounter</div>
<div id="t66" class="t" style="left:1404.00px;top:626.55px;font-size:16.30px;font-weight:400;color:#21496a;letter-spacing:-0.192px;">04/12/2025</div>
<div id="t67" class="t" style="left:1776.00px;top:626.55px;font-size:16.30px;font-weight:400;color:#21496a;letter-spacing:-0.267px;">United Healthcare</div>
<div id="t68" class="t" style="left:211.41px;top:668.17px;font-size:16.17px;font-weight:400;color:#2b90d0;letter-spacing:-0.600px;">Resolved</div>
<div id="t69" class="t" style="left:347.70px;top:668.05px;font-size:16.30px;font-weight:400;color:#21496a;letter-spacing:-1.606px;">RELAY</div>
<div id="t70" class="t" style="left:510.20px;top:668.05px;font-size:16.30px;font-weight:400;color:#2b90d0;letter-spacing:-0.272px;">3512228</div>
<div id="t71" class="t" style="left:646.90px;top:668.05px;font-size:16.30px;font-weight:400;color:#2b90d0;letter-spacing:-0.272px;">3813138</div>
<div id="t72" class="t" style="left:969.80px;top:668.05px;font-size:16.30px;font-weight:400;color:#21496a;letter-spacing:-0.563px;">Settled Encounter</div>
<div id="t73" class="t" style="left:1218.60px;top:668.05px;font-size:16.30px;font-weight:400;color:#21496a;letter-spacing:-0.192px;">03/31/2025</div>
<div id="t74" class="t" style="left:1404.00px;top:668.05px;font-size:16.30px;font-weight:400;color:#21496a;letter-spacing:-0.192px;">03/31/2025</div>
<div id="t75" class="t" style="left:1590.50px;top:668.05px;font-size:16.30px;font-weight:400;color:#21496a;letter-spacing:-0.192px;">03/31/2025</div>
<div id="t76" class="t" style="left:1776.00px;top:668.05px;font-size:16.30px;font-weight:400;color:#21496a;letter-spacing:-0.222px;width:186.0px;overflow:hidden;">1199 National Benefit Fund</div>
<div id="t77" class="t" style="left:212.40px;top:710.55px;font-size:16.30px;font-weight:400;color:#2b90d0;letter-spacing:-0.399px;">Appeal letter in ...</div>
<div id="t78" class="t" style="left:347.70px;top:710.55px;font-size:16.30px;font-weight:400;color:#21496a;letter-spacing:-1.606px;">RELAY</div>
<div id="t79" class="t" style="left:510.20px;top:710.55px;font-size:16.30px;font-weight:400;color:#2b90d0;letter-spacing:-0.272px;">3510982</div>
<div id="t80" class="t" style="left:646.90px;top:710.55px;font-size:16.30px;font-weight:400;color:#2b90d0;letter-spacing:-0.272px;">3813090</div>
<div id="t81" class="t" style="left:969.80px;top:710.55px;font-size:16.30px;font-weight:400;color:#21496a;letter-spacing:-0.593px;">Sent to Payer Leave Open</div>
<div id="t82" class="t" style="left:1404.00px;top:710.55px;font-size:16.30px;font-weight:400;color:#21496a;letter-spacing:-0.192px;">03/17/2025</div>
<div id="t83" class="t" style="left:1590.50px;top:710.55px;font-size:16.30px;font-weight:400;color:#21496a;letter-spacing:-0.192px;">03/17/2025</div>
<div id="t84" class="t" style="left:1776.00px;top:710.55px;font-size:16.30px;font-weight:400;color:#21496a;letter-spacing:-0.222px;width:186.0px;overflow:hidden;">1199 National Benefit Fund</div>
<div id="t85" class="t" style="left:212.40px;top:753.58px;font-size:15.68px;font-weight:400;color:#2b90d0;letter-spacing:-0.600px;">Select</div>
<div id="t86" class="t" style="left:347.70px;top:753.05px;font-size:16.30px;font-weight:400;color:#21496a;letter-spacing:-1.606px;">RELAY</div>
<div id="t87" class="t" style="left:510.20px;top:753.05px;font-size:16.30px;font-weight:400;color:#2b90d0;letter-spacing:-0.272px;">3510788</div>
<div id="t88" class="t" style="left:646.90px;top:753.05px;font-size:16.30px;font-weight:400;color:#2b90d0;letter-spacing:-0.272px;">3812889</div>
<div id="t89" class="t" style="left:969.80px;top:753.05px;font-size:16.30px;font-weight:400;color:#21496a;letter-spacing:-0.593px;">Sent to Payer Leave Open</div>
<div id="t90" class="t" style="left:1218.60px;top:753.05px;font-size:16.30px;font-weight:400;color:#21496a;letter-spacing:-0.192px;">03/03/2025</div>
<div id="t91" class="t" style="left:1404.00px;top:753.05px;font-size:16.30px;font-weight:400;color:#21496a;letter-spacing:-0.192px;">03/03/2025</div>
<div id="t92" class="t" style="left:1590.50px;top:753.05px;font-size:16.30px;font-weight:400;color:#21496a;letter-spacing:-0.192px;">03/03/2025</div>
<div id="t93" class="t" style="left:1776.00px;top:753.05px;font-size:16.30px;font-weight:400;color:#21496a;letter-spacing:-0.222px;width:186.0px;overflow:hidden;">1199 National Benefit Fund</div>
<div id="t94" class="t" style="left:212.40px;top:796.08px;font-size:15.68px;font-weight:400;color:#2b90d0;letter-spacing:-0.600px;">Select</div>
<div id="t95" class="t" style="left:347.70px;top:795.55px;font-size:16.30px;font-weight:400;color:#21496a;letter-spacing:-1.606px;">RELAY</div>
<div id="t96" class="t" style="left:510.20px;top:795.55px;font-size:16.30px;font-weight:400;color:#2b90d0;letter-spacing:-0.272px;">3509958</div>
<div id="t97" class="t" style="left:646.90px;top:795.55px;font-size:16.30px;font-weight:400;color:#2b90d0;letter-spacing:-0.272px;">3812235</div>
<div id="t98" class="t" style="left:969.80px;top:794.63px;font-size:16.20px;font-weight:400;color:#21496a;letter-spacing:-0.600px;">SentToPayer</div>
<div id="t99" class="t" style="left:1217.60px;top:795.55px;font-size:16.30px;font-weight:400;color:#21496a;letter-spacing:0.053px;">11/26/2024</div>
<div id="t100" class="t" style="left:1403.00px;top:795.55px;font-size:16.30px;font-weight:400;color:#21496a;letter-spacing:0.053px;">11/26/2024</div>
<div id="t101" class="t" style="left:1776.00px;top:795.55px;font-size:16.30px;font-weight:400;color:#21496a;letter-spacing:-0.222px;width:186.0px;overflow:hidden;">1199 National Benefit Fund</div>
</body></html>
